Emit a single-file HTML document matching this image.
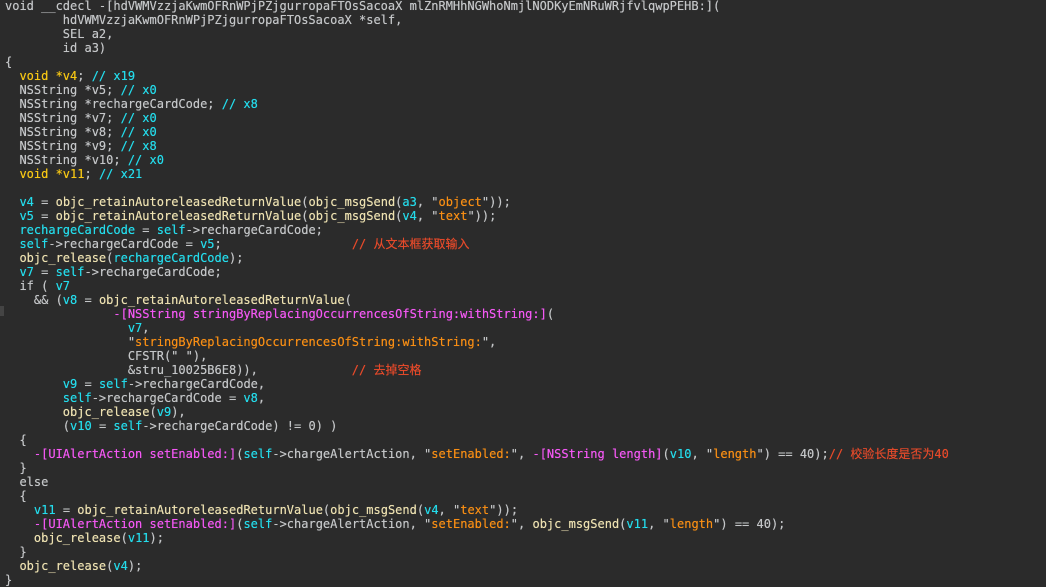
<!DOCTYPE html>
<html><head><meta charset="utf-8"><style>
html,body{margin:0;padding:0;background:#2b2b2b;width:1046px;height:578px;overflow:hidden}
pre{margin:0;position:absolute;left:5px;top:-1px;font-family:"DejaVu Sans Mono","Liberation Mono","Noto Sans CJK SC",monospace;font-size:12px;line-height:14px;color:#c4c6c8;white-space:pre;text-shadow:0 0 0.4px currentColor}
.f{color:#ece0b0}.v{color:#24dcec}.y{color:#f8c814}.s{color:#f88e14}.m{color:#f458f4}.c{color:#e64a2a;font-family:"DejaVu Sans Mono","Noto Sans CJK SC",monospace}
.mk{position:absolute;left:0;top:306px;width:4px;height:10px;background:#444}
</style></head><body>
<div class="mk"></div>
<pre>void __cdecl -[hdVWMVzzjaKwmOFRnWPjPZjgurropaFTOsSacoaX mlZnRMHhNGWhoNmjlNODKyEmNRuWRjfvlqwpPEHB:](
        hdVWMVzzjaKwmOFRnWPjPZjgurropaFTOsSacoaX *self,
        SEL a2,
        id a3)
{
  <span class="y">void *v4</span>; <span class="v">// x19</span>
  NSString *v5; <span class="v">// x0</span>
  NSString *rechargeCardCode; <span class="v">// x8</span>
  NSString *v7; <span class="v">// x0</span>
  NSString *v8; <span class="v">// x0</span>
  NSString *v9; <span class="v">// x8</span>
  NSString *v10; <span class="v">// x0</span>
  <span class="y">void *v11</span>; <span class="v">// x21</span>

  <span class="v">v4</span> = <span class="f">objc_retainAutoreleasedReturnValue</span>(<span class="f">objc_msgSend</span>(<span class="v">a3</span>, "<span class="s">object</span>"));
  <span class="v">v5</span> = <span class="f">objc_retainAutoreleasedReturnValue</span>(<span class="f">objc_msgSend</span>(<span class="v">v4</span>, "<span class="s">text</span>"));
  <span class="v">rechargeCardCode</span> = <span class="v">self</span>-&gt;rechargeCardCode;
  <span class="v">self</span>-&gt;rechargeCardCode = <span class="v">v5</span>;                  <span class="c">// 从文本框获取输入</span>
  <span class="f">objc_release</span>(<span class="v">rechargeCardCode</span>);
  <span class="v">v7</span> = <span class="v">self</span>-&gt;rechargeCardCode;
  if ( <span class="v">v7</span>
    &amp;&amp; (<span class="v">v8</span> = <span class="f">objc_retainAutoreleasedReturnValue</span>(
               <span class="m">-[NSString stringByReplacingOccurrencesOfString:withString:]</span>(
                 <span class="v">v7</span>,
                 "<span class="s">stringByReplacingOccurrencesOfString:withString:</span>",
                 CFSTR(" "),
                 &amp;stru_10025B6E8)),             <span class="c">// 去掉空格</span>
        <span class="v">v9</span> = <span class="v">self</span>-&gt;rechargeCardCode,
        <span class="v">self</span>-&gt;rechargeCardCode = <span class="v">v8</span>,
        <span class="f">objc_release</span>(<span class="v">v9</span>),
        (<span class="v">v10</span> = <span class="v">self</span>-&gt;rechargeCardCode) != 0) )
  {
    <span class="m">-[UIAlertAction setEnabled:]</span>(<span class="v">self</span>-&gt;chargeAlertAction, "<span class="s">setEnabled:</span>", <span class="m">-[NSString length]</span>(<span class="v">v10</span>, "<span class="s">length</span>") == 40);<span class="c">// 校验长度是否为40</span>
  }
  else
  {
    <span class="v">v11</span> = <span class="f">objc_retainAutoreleasedReturnValue</span>(<span class="f">objc_msgSend</span>(<span class="v">v4</span>, "<span class="s">text</span>"));
    <span class="m">-[UIAlertAction setEnabled:]</span>(<span class="v">self</span>-&gt;chargeAlertAction, "<span class="s">setEnabled:</span>", <span class="f">objc_msgSend</span>(<span class="v">v11</span>, "<span class="s">length</span>") == 40);
    <span class="f">objc_release</span>(<span class="v">v11</span>);
  }
  <span class="f">objc_release</span>(<span class="v">v4</span>);
}</pre>
</body></html>
